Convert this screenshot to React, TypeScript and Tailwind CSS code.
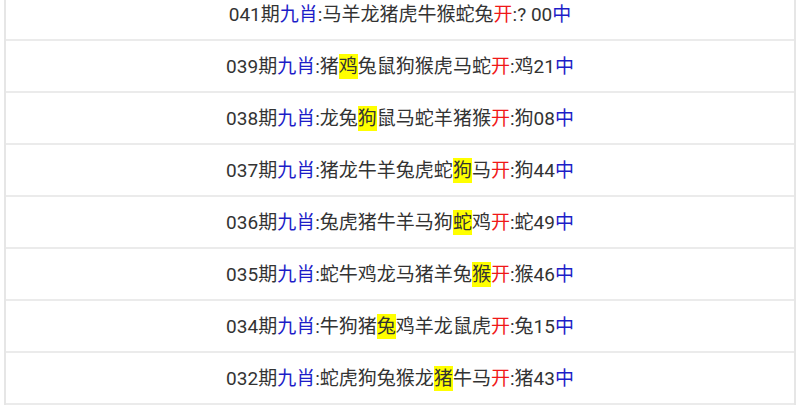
import React from "react";

type Row = { no: string; animals: string; hit: number; open: string; num: string };

const rows: Row[] = [
  { no: "041", animals: "马羊龙猪虎牛猴蛇兔", hit: -1, open: "?", num: " 00" },
  { no: "039", animals: "猪鸡兔鼠狗猴虎马蛇", hit: 1, open: "鸡", num: "21" },
  { no: "038", animals: "龙兔狗鼠马蛇羊猪猴", hit: 2, open: "狗", num: "08" },
  { no: "037", animals: "猪龙牛羊兔虎蛇狗马", hit: 7, open: "狗", num: "44" },
  { no: "036", animals: "兔虎猪牛羊马狗蛇鸡", hit: 7, open: "蛇", num: "49" },
  { no: "035", animals: "蛇牛鸡龙马猪羊兔猴", hit: 8, open: "猴", num: "46" },
  { no: "034", animals: "牛狗猪兔鸡羊龙鼠虎", hit: 3, open: "兔", num: "15" },
  { no: "032", animals: "蛇虎狗兔猴龙猪牛马", hit: 6, open: "猪", num: "43" },
];

export default function App() {
  return (
    <div
      className="w-[800px] h-[405px] overflow-hidden bg-white"
      style={{ fontFamily: 'Roboto, "Noto Sans CJK SC", sans-serif' }}
    >
      <div className="mx-[4px] -mt-[11px] border-x-2 border-[#e6e6e6]">
        {rows.map((r) => (
          <div
            key={r.no}
            className="h-[52px] border-b-2 border-[#ebebeb] flex items-center justify-center text-[19px] text-[#333333] leading-none"
          >
            <span>{r.no}期</span>
            <span className="text-[#1d1dc8]">九肖</span>
            <span>:</span>
            {Array.from(r.animals).map((c, i) =>
              i === r.hit ? (
                <span key={i} className="bg-[#ffff00] inline-block h-[25px] leading-[25px]">
                  {c}
                </span>
              ) : (
                <span key={i}>{c}</span>
              )
            )}
            <span className="text-[#f01818]">开</span>
            <span>:{r.open}</span>
            <span className="whitespace-pre">{r.num}</span>
            <span className="text-[#1d1dc8]">中</span>
          </div>
        ))}
      </div>
    </div>
  );
}
